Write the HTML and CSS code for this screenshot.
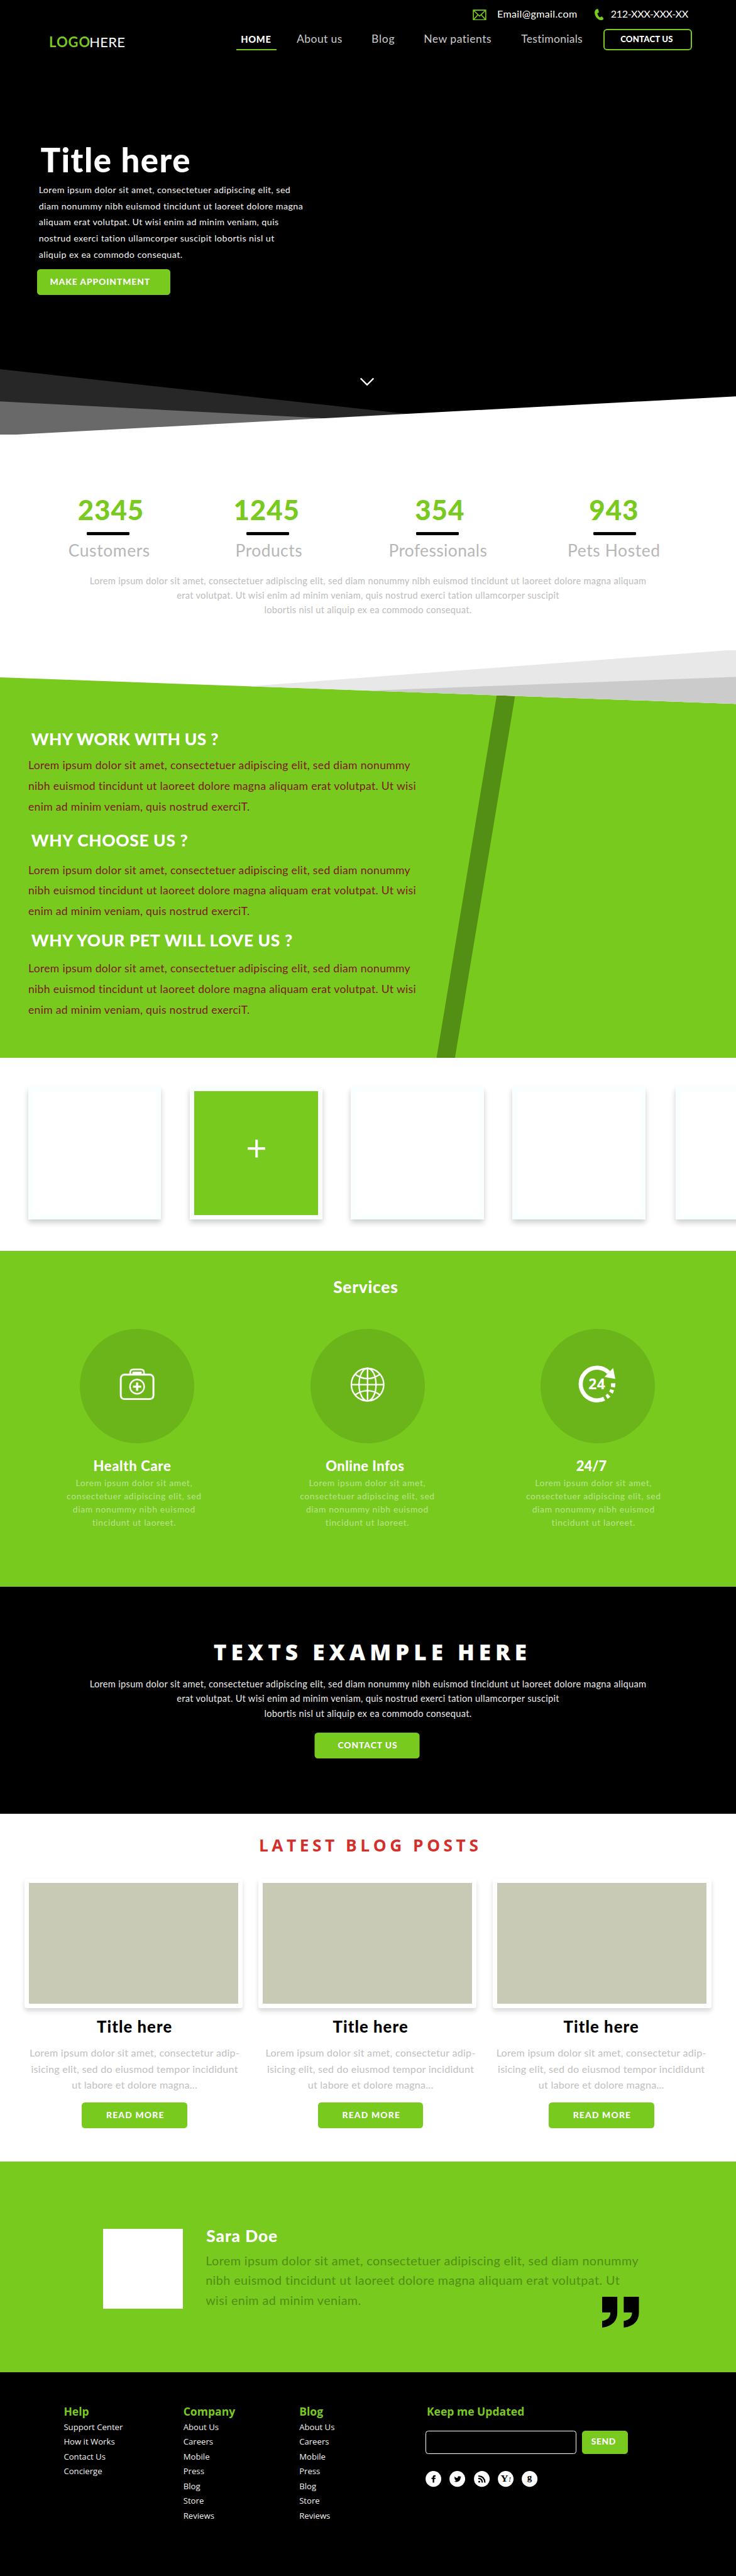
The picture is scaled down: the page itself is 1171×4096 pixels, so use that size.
FILE: index.html
```html
<!DOCTYPE html>
<html lang="en">
<head>
<meta charset="utf-8">
<title>LogoHere</title>
<link rel="stylesheet" href="styles.css">
</head>
<body>

<header class="hero">
  <svg class="hero-slope" viewBox="0 0 1600 144" preserveAspectRatio="none">
    <polygon points="0,0 883,97 883,144 0,144" fill="#272727"/>
    <polygon points="0,70 711,107 711,144 0,144" fill="#696969"/>
    <polygon points="0,144 1600,59 1600,144" fill="#fff"/>
    <polyline points="784,20 798,34 812,20" fill="none" stroke="#fff" stroke-width="3.2"/>
  </svg>
  <div class="contacts">
    <svg class="icon-mail" viewBox="0 0 30 24"><path d="M1.5 1.5h27v21h-27zM2 2l13 12.500L28 2M2 22l9.500-10.500M28 22l-9.500-10.500" fill="none" stroke="#78ca1e" stroke-width="2.200"/></svg>
    <span class="contact-mail">Email@gmail.com</span>
    <svg class="icon-phone" viewBox="0 0 20 25"><path d="M5.500.3C2 1.500 0 4.500.2 8.500c.3 7 5.300 14.300 11.800 16.100 3 .8 6.500-.3 7.700-2.600.5-.9.3-1.600-.4-2.200l-3.200-2.600c-.8-.6-1.600-.5-2.300.1l-1.700 1.600C8.800 17.300 6.600 13.500 6 9.600l2.300-.9c.8-.3 1.200-1 1-1.900L8.200 1.700C7.900.6 6.800-.1 5.500.3z" fill="#78ca1e"/></svg>
    <span class="contact-phone">212-XXX-XXX-XX</span>
  </div>
  <nav class="nav">
    <a class="logo"><b>LOGO</b><span>HERE</span></a>
    <a class="nav-home">HOME</a>
    <a class="nav-link nav-about">About us</a>
    <a class="nav-link nav-blog">Blog</a>
    <a class="nav-link nav-patients">New patients</a>
    <a class="nav-link nav-testimonials">Testimonials</a>
    <a class="nav-contact">CONTACT US</a>
  </nav>
  <h1 class="hero-title">Title here</h1>
  <p class="hero-text">Lorem ipsum dolor sit amet, consectetuer adipiscing elit, sed<br>diam nonummy nibh euismod tincidunt ut laoreet dolore magna<br>aliquam erat volutpat. Ut wisi enim ad minim veniam, quis<br>nostrud exerci tation ullamcorper suscipit lobortis nisl ut<br>aliquip ex ea commodo consequat.</p>
  <a class="btn btn-appointment">MAKE APPOINTMENT</a>
</header>

<section class="stats">
  <div class="stats-row">
    <div class="stat stat-customers"><strong>2345</strong><i></i><span>Customers</span></div>
    <div class="stat stat-products"><strong>1245</strong><i></i><span>Products</span></div>
    <div class="stat stat-pros"><strong>354</strong><i></i><span>Professionals</span></div>
    <div class="stat stat-pets"><strong>943</strong><i></i><span>Pets Hosted</span></div>
  </div>
  <p class="wide-text">Lorem ipsum dolor sit amet, consectetuer adipiscing elit, sed diam nonummy nibh euismod tincidunt ut laoreet dolore magna aliquam<br>erat volutpat. Ut wisi enim ad minim veniam, quis nostrud exerci tation ullamcorper suscipit<br>lobortis nisl ut aliquip ex ea commodo consequat.</p>
</section>

<section class="why">
  <svg class="why-slope" viewBox="0 0 1600 885" preserveAspectRatio="none">
    <polygon points="1083,80 1123,80 989,885 949,885" fill="#538f15"/>
    <polygon points="0,0 1600,0 1600,117.5 0,60" fill="#fff"/>
    <polygon points="541,79.400 1600,0 1600,117.500" fill="#e8e8e8"/>
    <polygon points="801,88.800 1600,59 1600,117.500" fill="#cbcbcb"/>
  </svg>
  <h2 class="why-work">WHY WORK WITH US ?</h2>
  <p>Lorem ipsum dolor sit amet, consectetuer adipiscing elit, sed diam nonummy<br>nibh euismod tincidunt ut laoreet dolore magna aliquam erat volutpat. Ut wisi<br>enim ad minim veniam, quis nostrud exerciT.</p>
  <h2 class="why-choose">WHY CHOOSE US ?</h2>
  <p>Lorem ipsum dolor sit amet, consectetuer adipiscing elit, sed diam nonummy<br>nibh euismod tincidunt ut laoreet dolore magna aliquam erat volutpat. Ut wisi<br>enim ad minim veniam, quis nostrud exerciT.</p>
  <h2 class="why-pet">WHY YOUR PET WILL LOVE US ?</h2>
  <p>Lorem ipsum dolor sit amet, consectetuer adipiscing elit, sed diam nonummy<br>nibh euismod tincidunt ut laoreet dolore magna aliquam erat volutpat. Ut wisi<br>enim ad minim veniam, quis nostrud exerciT.</p>
</section>

<section class="gallery">
  <div class="tile"><div class="tile-face"></div></div>
  <div class="tile"><div class="tile-face tile-active"><svg viewBox="0 0 40 40"><path d="M20 0v40M0 20h40" stroke="#fff" stroke-width="5.600"/></svg></div></div>
  <div class="tile"><div class="tile-face"></div></div>
  <div class="tile"><div class="tile-face"></div></div>
  <div class="tile tile-last"><div class="tile-face"></div></div>
</section>

<section class="services">
  <h2>Services</h2>
  <div class="services-row">
    <article class="service service-health">
      <svg class="service-icon" viewBox="0 0 249 249" fill="none" stroke="#fff">
        <rect x="89" y="99.500" width="71" height="53" rx="8" stroke-width="4"/>
        <path d="M109.500 98v-3q0-7 7-7h16q7 0 7 7v3" stroke-width="3.500"/>
        <path d="M116 98v-3.500h17V98" stroke-width="3" fill="#fff"/>
        <circle cx="124.500" cy="125.500" r="15.500" stroke-width="3.200"/>
        <path d="M124.500 116.500v18M115.500 125.500h18" stroke-width="4.600"/>
      </svg>
      <h3>Health Care</h3>
      <p>Lorem ipsum dolor sit amet,<br>consectetuer adipiscing elit, sed<br>diam nonummy nibh euismod<br>tincidunt ut laoreet.</p>
    </article>
    <article class="service service-online">
      <svg class="service-icon" viewBox="0 0 249 249" fill="none" stroke="#fff" stroke-width="3.200">
        <circle cx="124" cy="121" r="35.300"/>
        <ellipse cx="124" cy="121" rx="18.500" ry="35.300"/>
        <path d="M124 86v70M89 121h70M97.500 99q26.500 18 53 0M97.500 143q26.500-18 53 0"/>
      </svg>
      <h3>Online Infos</h3>
      <p>Lorem ipsum dolor sit amet,<br>consectetuer adipiscing elit, sed<br>diam nonummy nibh euismod<br>tincidunt ut laoreet.</p>
    </article>
    <article class="service service-always">
      <svg class="service-icon" viewBox="0 0 249 249">
        <g transform="translate(55.500 34) scale(.33333)" fill="#fff">
          <path d="M278 183A106.500 106.500 0 1 0 249 353" fill="none" stroke="#fff" stroke-width="27"/>
          <polygon points="307,153 321,224 250,212"/>
          <polygon points="293,253 322,253 319,280 293,276"/>
          <polygon points="289,290 313,299 304,321 281,306"/>
          <polygon points="269,320 290,341 271,354 257,332"/>
          <text class="icon-24" x="146" y="293" textLength="109">24</text>
        </g>
      </svg>
      <h3>24/7</h3>
      <p>Lorem ipsum dolor sit amet,<br>consectetuer adipiscing elit, sed<br>diam nonummy nibh euismod<br>tincidunt ut laoreet.</p>
    </article>
  </div>
</section>

<section class="cta">
  <h2>TEXTS EXAMPLE HERE</h2>
  <p class="wide-text">Lorem ipsum dolor sit amet, consectetuer adipiscing elit, sed diam nonummy nibh euismod tincidunt ut laoreet dolore magna aliquam<br>erat volutpat. Ut wisi enim ad minim veniam, quis nostrud exerci tation ullamcorper suscipit<br>lobortis nisl ut aliquip ex ea commodo consequat.</p>
  <a class="btn btn-cta">CONTACT US</a>
</section>

<section class="blog">
  <h2>LATEST BLOG POSTS</h2>
  <div class="posts">
    <article class="post post-first">
      <div class="post-frame"><div class="post-image"></div></div>
      <div class="post-body">
        <h3>Title here</h3>
        <p>Lorem ipsum dolor sit amet, consectetur adip-<br>isicing elit, sed do eiusmod tempor incididunt<br>ut labore et dolore magna...</p>
        <a class="btn btn-read">READ MORE</a>
      </div>
    </article>
    <article class="post post-second">
      <div class="post-frame"><div class="post-image"></div></div>
      <div class="post-body">
        <h3>Title here</h3>
        <p>Lorem ipsum dolor sit amet, consectetur adip-<br>isicing elit, sed do eiusmod tempor incididunt<br>ut labore et dolore magna...</p>
        <a class="btn btn-read">READ MORE</a>
      </div>
    </article>
    <article class="post post-third">
      <div class="post-frame"><div class="post-image"></div></div>
      <div class="post-body">
        <h3>Title here</h3>
        <p>Lorem ipsum dolor sit amet, consectetur adip-<br>isicing elit, sed do eiusmod tempor incididunt<br>ut labore et dolore magna...</p>
        <a class="btn btn-read">READ MORE</a>
      </div>
    </article>
  </div>
</section>

<section class="testimonial">
  <div class="avatar"></div>
  <blockquote>
    <h3>Sara Doe</h3>
    <p>Lorem ipsum dolor sit amet, consectetuer adipiscing elit, sed diam nonummy<br>nibh euismod tincidunt ut laoreet dolore magna aliquam erat volutpat. Ut<br>wisi enim ad minim veniam.</p>
    <svg class="quote-mark" viewBox="0 0 80 67"><path d="M0 0h33v34q0 28-33 33V52.500q18-3 18-18.500H0zM47 0h33v34q0 28-33 33V52.500q18-3 18-18.500H47z"/></svg>
  </blockquote>
</section>

<footer class="footer">
  <div class="foot-col">
    <h4>Help</h4>
    <a>Support Center</a><a>How it Works</a><a>Contact Us</a><a>Concierge</a>
  </div>
  <div class="foot-col">
    <h4>Company</h4>
    <a>About Us</a><a>Careers</a><a>Mobile</a><a>Press</a><a>Blog</a><a>Store</a><a>Reviews</a>
  </div>
  <div class="foot-col">
    <h4>Blog</h4>
    <a>About Us</a><a>Careers</a><a>Mobile</a><a>Press</a><a>Blog</a><a>Store</a><a>Reviews</a>
  </div>
  <div class="foot-col">
    <h4 class="updates-title">Keep me Updated</h4>
    <div class="subscribe"><input type="text" aria-label="Email"><a class="btn btn-send">SEND</a></div>
    <div class="socials">
      <svg viewBox="0 0 104 104"><circle cx="52" cy="52" r="51.500" fill="#fff"/><path d="M47 76V53h-8v-9h8v-4q0-12 12-12h7v9h-4q-5 0-5 4v3h9l-1 9h-8v23z"/></svg>
      <svg viewBox="0 0 104 104"><circle cx="52" cy="52" r="51.500" fill="#fff"/><path transform="translate(31 29.500) scale(1.960)" d="M23.950 4.570a10 10 0 0 1-2.820.780 4.960 4.960 0 0 0 2.160-2.730 9.900 9.900 0 0 1-3.120 1.200 4.920 4.920 0 0 0-8.390 4.480C7.690 8.090 4.070 6.130 1.640 3.160a4.920 4.920 0 0 0 1.520 6.570 4.900 4.900 0 0 1-2.230-.610v.060a4.920 4.920 0 0 0 3.950 4.830 5 5 0 0 1-2.210.080 4.940 4.940 0 0 0 4.600 3.420A9.870 9.870 0 0 1 0 19.540a13.990 13.990 0 0 0 7.550 2.210c9.050 0 14-7.500 14-13.980l-.020-.640a9.940 9.940 0 0 0 2.420-2.560z"/></svg>
      <svg viewBox="0 0 104 104"><circle cx="52" cy="52" r="51.500" fill="#fff"/><circle cx="35" cy="70" r="6.500"/><path d="M29 49q25 1 26 27M29 33q41 1 43 43" fill="none" stroke="#000" stroke-width="9"/></svg>
      <svg viewBox="0 0 104 104"><circle cx="52" cy="52" r="51.500" fill="#fff"/><text class="glyph-y" x="19" y="72" textLength="50" lengthAdjust="spacingAndGlyphs">Y</text><text class="glyph-bang" x="71" y="72">!</text></svg>
      <svg viewBox="0 0 104 104"><circle cx="52" cy="52" r="51.500" fill="#fff"/><text class="glyph-g" x="36" y="63">g</text></svg>
    </div>
  </div>
</footer>

</body>
</html>
```

FILE: styles.css
```css
/* 1rem = 10 design units */
html { font-size: 7.32px; }
* { box-sizing: border-box; }
body {
  margin: 0;
  background: #fff;
  font-family: Lato, "Open Sans", sans-serif;
  overflow-x: hidden;
}
h1, h2, h3, h4, p, blockquote { margin: 0; }
svg { display: block; }
section, header, footer { overflow: hidden; }

.btn {
  display: block;
  background: #78ca1e;
  color: #fff;
  border-radius: .7rem;
  font-size: 1.9rem;
  line-height: 2.4rem;
  font-weight: 900;
  height: 5.6rem;
  white-space: nowrap;
}

/* Hero */
.hero { position: relative; height: 94.4rem; background: #000; color: #fff; }
.hero-slope { position: absolute; left: 0; bottom: -1px; width: 100%; height: 14.4rem; }
.contacts {
  display: grid;
  grid-template-columns: 5.36rem 21.14rem 3.55rem auto;
  justify-content: start;
  padding: 1.52rem 0 0 102.7rem;
  font-size: 2.2rem;
  line-height: 3rem;
  height: 4.45rem;
}
.icon-mail { width: 3rem; height: 2.4rem; margin-top: .48rem; }
.icon-phone { width: 2rem; height: 2.5rem; margin-top: .4rem; }
.contact-mail { letter-spacing: .047rem; }
.contact-phone { letter-spacing: -.044rem; }
.nav {
  display: grid;
  grid-template-columns: 40.63rem 13.2rem 16.24rem 11.36rem 21.2rem 17.9rem 19.2rem;
  align-items: start;
  justify-items: start;
  padding: 1.85rem 0 0 10.67rem;
  height: 6.55rem;
  white-space: nowrap;
}
.logo { display: flex; padding-top: 1.04rem; font-size: 3rem; line-height: 3.6rem; }
.logo b { color: #78ca1e; font-weight: 700; letter-spacing: .13rem; }
.logo span { letter-spacing: .03rem; margin-left: -.25rem; }
.nav-home {
  width: 8.8rem;
  margin-top: 1.14rem;
  padding: 0 0 .86rem 1.05rem;
  border-bottom: .35rem solid #78ca1e;
  font-size: 2rem;
  line-height: 2.4rem;
  font-weight: 900;
  letter-spacing: .099rem;
}
.nav-link { padding-top: .72rem; font-size: 2.4rem; line-height: 3rem; color: #ccc; }
.nav-about { letter-spacing: .053rem; }
.nav-blog { letter-spacing: .1rem; }
.nav-patients { letter-spacing: .069rem; }
.nav-testimonials { letter-spacing: .037rem; }
.nav-contact {
  width: 19.2rem;
  height: 4.7rem;
  border: .3rem solid #78ca1e;
  border-radius: .8rem;
  padding: .87rem 0 0 3.4rem;
  font-size: 1.8rem;
  line-height: 2.2rem;
  font-weight: 900;
  letter-spacing: .026rem;
}
.hero-title {
  margin: 19.78rem 0 0 8.8rem;
  font-size: 7.2rem;
  line-height: 8rem;
  font-weight: 900;
  letter-spacing: .2rem;
}
.hero-text {
  margin: .69rem 0 0 8.42rem;
  font-size: 1.95rem;
  line-height: 3.52rem;
  letter-spacing: .058rem;
  color: #f4f4f4;
}
.btn-appointment {
  width: 28.9rem;
  margin: 1.42rem 0 0 8.1rem;
  padding: 1.52rem 0 0 2.76rem;
  letter-spacing: .12rem;
}

/* Stats */
.stats { height: 46.9rem; padding-top: 12.82rem; }
.stats-row {
  display: grid;
  grid-template-columns: 34.7rem 36.8rem 38.6rem 25rem;
  padding-left: 11.05rem;
}
.stat { display: flex; flex-direction: column; align-items: center; width: 25rem; }
.stat strong { color: #78ca1e; font-size: 6rem; line-height: 7rem; font-weight: 900; letter-spacing: .12rem; }
.stat i { width: 9.3rem; height: .65rem; margin: 1.4rem 0 1.06rem; border-radius: .2rem; background: #000; }
.stat span { color: #b7b7b7; font-size: 3.6rem; line-height: 4.4rem; letter-spacing: .09rem; }
.stat-customers strong { padding-left: 1.1rem; }
.stat-customers span { padding-left: .4rem; }
.stat-products strong { padding-right: .6rem; }
.stat-products span { padding-left: .4rem; letter-spacing: .069rem; }
.stat-pros strong { padding-left: 1.1rem; }
.stat-pros span { padding-left: .3rem; letter-spacing: .057rem; }
.stat-pets strong { padding-right: .4rem; }
.stat-pets span { padding-right: .4rem; }
.wide-text {
  text-align: center;
  font-size: 2rem;
  line-height: 3.19rem;
  letter-spacing: .041rem;
  color: #bdbdbd;
  white-space: nowrap;
}
.stats .wide-text { margin-top: 2.82rem; }

/* Why us */
.why { position: relative; height: 88.5rem; padding-top: 17.02rem; background: #78ca1e; }
.why-slope { position: absolute; left: 0; top: -1px; width: 100%; height: 100.2%; }
.why h2, .why p { position: relative; }
.why h2 { padding-left: 6.8rem; color: #fff; font-size: 3.6rem; line-height: 4.4rem; font-weight: 900; letter-spacing: .09rem; }
.why p { padding-left: 6.14rem; color: #7d1a17; font-size: 2.4rem; line-height: 4.5rem; letter-spacing: .044rem; }
.why .why-work { margin-bottom: 1.41rem; letter-spacing: .045rem; }
.why .why-choose { margin: 2.73rem 0 2.07rem; }
.why .why-pet { margin: 1.67rem 0 1.87rem; }

/* Gallery */
.gallery { display: flex; gap: 6.2rem; height: 41.9rem; padding: 6.1rem 0 0 6.1rem; }
.tile {
  flex: none;
  width: 28.9rem;
  height: 29rem;
  padding: 1.1rem 1rem 1rem;
  background: #f9fffe;
  box-shadow: 0 .8rem 1.2rem rgba(0, 0, 0, .2);
}
.tile-last { margin-left: .4rem; }
.tile-face { display: flex; align-items: center; justify-content: center; height: 100%; background: #fff; }
.tile-active { background: #78ca1e; }
.tile-active svg { width: 3.9rem; height: 3.9rem; margin-bottom: 1.8rem; margin-left: .2rem; }

/* Services */
.services { height: 73rem; padding-top: 5.68rem; background: #78ca1e; color: #fff; text-align: center; }
.services h2 { padding-right: 1rem; font-size: 3.6rem; line-height: 4.4rem; font-weight: 900; letter-spacing: .096rem; }
.services-row { display: grid; grid-template-columns: 50.2rem 50rem 32rem; padding: 6.82rem 0 0 13.75rem; }
.service { width: 32rem; }
.service-icon { width: 24.9rem; height: 24.9rem; margin: 0 auto; border-radius: 50%; background: #6bb41a; }
.service h3 { margin: 3.16rem 0 .33rem; font-size: 3rem; line-height: 3.6rem; font-weight: 900; letter-spacing: .09rem; }
.service p { font-size: 1.9rem; line-height: 2.9rem; letter-spacing: .089rem; color: #b9e48d; }
.service-health h3 { padding-right: 2rem; }
.service-health p { padding-right: 1.2rem; }
.service-online h3 { padding-right: 1.2rem; letter-spacing: .065rem; }
.service-online p { padding-right: .2rem; }
.service-always h3 { padding-right: 2.8rem; letter-spacing: 0; }
.service-always p { padding-right: 1.9rem; }
.icon-24 { font: 700 94px "Open Sans", sans-serif; }

/* Call to action */
.cta { height: 49.3rem; padding-top: 11.36rem; background: #000; color: #fff; }
.cta h2 {
  padding-left: 1.9rem;
  text-align: center;
  font: 800 4.8rem/5.6rem "Open Sans", sans-serif;
  letter-spacing: .95rem;
}
.cta .wide-text { margin-top: 2.56rem; line-height: 3.2rem; color: #ececec; }
.btn-cta { width: 22.8rem; margin: 2.58rem auto 0; padding: 1.5rem 0 0 5.05rem; letter-spacing: .119rem; transform: translateX(-.2rem); }

/* Blog */
.blog { height: 75.6rem; padding-top: 4.68rem; }
.blog h2 {
  padding-left: 1rem;
  text-align: center;
  color: #d42f2b;
  font: 700 3.6rem/4.4rem "Open Sans", sans-serif;
  letter-spacing: .752rem;
}
.posts { display: grid; grid-template-columns: 50.8rem 51rem 47.5rem; padding: 4.92rem 0 0 5.3rem; }
.post { width: 47.5rem; }
.post-frame { height: 28.2rem; padding: 1rem; border-radius: .5rem; background: #fff; box-shadow: 0 .6rem 1rem rgba(0, 0, 0, .15); }
.post-image { height: 26.2rem; background: #c8cab5; }
.post-body { display: flex; flex-direction: column; align-items: center; padding-top: 2.08rem; }
.post-first .post-body { padding-left: .4rem; }
.post-second .post-body { padding-left: 1.4rem; }
.post-third .post-body { padding-right: .3rem; }
.post h3 { font-size: 3.5rem; line-height: 4rem; font-weight: 900; letter-spacing: .15rem; }
.post p { margin: 1.85rem 0 2.07rem; text-align: center; white-space: nowrap; color: #bfbfbf; font-size: 2.2rem; line-height: 3.5rem; letter-spacing: .036rem; }
.btn-read { width: 22.9rem; padding: 1.52rem 0 0 5.3rem; letter-spacing: .159rem; }

/* Testimonial */
.testimonial { display: flex; height: 45.7rem; padding: 13.75rem 0 0 22.35rem; background: #78ca1e; }
.avatar { width: 17.4rem; height: 17.4rem; margin-top: .75rem; background: #fff; }
.testimonial blockquote { position: relative; width: 94.2rem; margin-left: 4.95rem; padding-top: .08rem; white-space: nowrap; }
.testimonial h3 { padding-left: .15rem; color: #fff; font-size: 3.6rem; line-height: 4.4rem; font-weight: 900; letter-spacing: .124rem; }
.testimonial p { margin-top: 1.1rem; color: #528e15; font-size: 2.7rem; line-height: 4.3rem; letter-spacing: .058rem; }
.quote-mark { position: absolute; right: 0; top: 15.55rem; width: 8rem; height: 6.7rem; }

/* Footer */
.footer {
  display: grid;
  grid-template-columns: 26rem 25.2rem 27.4rem auto;
  justify-content: start;
  height: 44.3rem;
  padding: 7.07rem 0 0 13.85rem;
  background: #000;
  color: #fff;
  font-family: "Open Sans", sans-serif;
}
.foot-col { display: flex; flex-direction: column; }
.foot-col h4 { margin-bottom: .33rem; color: #78ca1e; font-size: 2.4rem; line-height: 3rem; font-weight: 700; }
.foot-col > a { font-size: 1.8rem; line-height: 3.2rem; color: #f0f0f0; }
.foot-col .updates-title { margin-bottom: 2.63rem; padding-left: .3rem; }
.subscribe { display: flex; gap: 1.3rem; }
.subscribe input { width: 32.8rem; height: 5rem; padding: 0 1rem; border: .2rem solid #fff; border-radius: .6rem; background: #000; color: #fff; }
.btn-send { width: 9.9rem; height: 5rem; padding: 1.04rem 0 0 1.97rem; font-family: Lato, sans-serif; letter-spacing: .078rem; }
.socials { display: flex; gap: 1.8rem; margin-top: 3.8rem; }
.socials svg { width: 3.45rem; height: 3.45rem; }
.glyph-y { font: bold 56px "Liberation Serif", serif; }
.glyph-bang { font: italic bold 40px "Liberation Serif", serif; }
.glyph-g { font: bold 62px "Liberation Serif", serif; }
```
